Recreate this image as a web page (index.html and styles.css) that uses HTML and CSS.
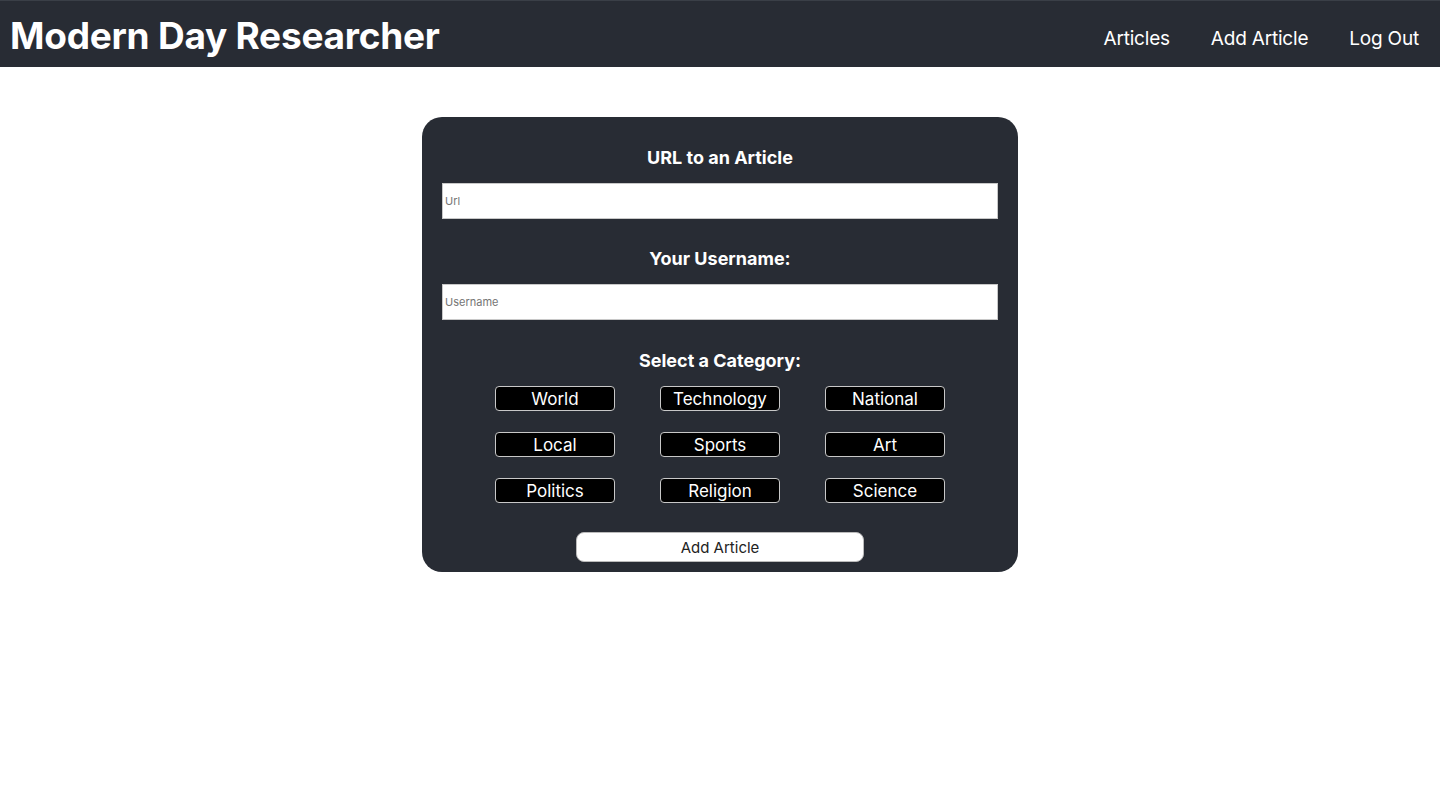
FILE: index.html
```html
<!DOCTYPE html>
<html lang="en">
<head>
<meta charset="utf-8">
<title>Modern Day Researcher</title>
<link rel="stylesheet" href="styles.css">
</head>
<body>
<header class="topbar">
  <h1 class="brand">Modern Day Researcher</h1>
  <nav class="nav">
    <a class="nav-link" href="#">Articles</a>
    <a class="nav-link" href="#">Add Article</a>
    <a class="nav-link" href="#">Log Out</a>
  </nav>
</header>
<main class="main">
  <form class="card">
    <h3 class="label">URL to an Article</h3>
    <input class="field" type="text" placeholder="Url">
    <h3 class="label label-gap">Your Username:</h3>
    <input class="field" type="text" placeholder="Username">
    <h3 class="label label-gap2">Select a Category:</h3>
    <div class="cats">
      <button type="button" class="cat">World</button>
      <button type="button" class="cat">Technology</button>
      <button type="button" class="cat">National</button>
      <button type="button" class="cat">Local</button>
      <button type="button" class="cat">Sports</button>
      <button type="button" class="cat">Art</button>
      <button type="button" class="cat">Politics</button>
      <button type="button" class="cat">Religion</button>
      <button type="button" class="cat">Science</button>
    </div>
    <button type="button" class="submit">Add Article</button>
  </form>
</main>
</body>
</html>
```
FILE: styles.css
```css
* { box-sizing: border-box; }
html, body { margin: 0; padding: 0; background: #fff; }
body { font-family: Inter, "Noto Sans", sans-serif; }

.topbar {
  height: 67px;
  background: #282c34;
  border-top: 1px solid #3a3f47;
  display: flex;
  align-items: center;
  justify-content: space-between;
  padding: 0 21px 0 10px;
}
.brand {
  margin: 0;
  padding-top: 2px;
  color: #fff;
  font-size: 37px;
  font-weight: 700;
  letter-spacing: -0.25px;
  line-height: 1;
}
.nav { display: flex; gap: 41px; padding-top: 9px; }
.nav-link {
  color: #fff;
  text-decoration: none;
  font-size: 19px;
  letter-spacing: -0.2px;
  font-weight: 400;
}

.main { display: flex; justify-content: center; padding-top: 50px; }
.card {
  width: 596px;
  background: #282c34;
  border-radius: 20px;
  padding: 30px 20px 10px;
  display: flex;
  flex-direction: column;
  align-items: center;
}
.label {
  margin: 0 0 15px;
  padding-top: 1px;
  color: #fff;
  font-size: 18px;
  font-weight: 700;
  line-height: 20px;
  text-align: center;
}
.label-gap { margin-top: 29px; }
.label-gap2 { margin-top: 30px; }
.field {
  width: 100%;
  height: 36px;
  flex: none;
  border: 1px solid #c8c8c8;
  background: #fff;
  padding: 0 2px;
  font-family: Inter, sans-serif;
  font-size: 11px;
  color: #333;
  outline: none;
}
.field::placeholder { color: #757575; }
.cats {
  display: grid;
  grid-template-columns: repeat(3, 120px);
  grid-auto-rows: 25px;
  column-gap: 45px;
  row-gap: 21px;
}
.cat {
  height: 25px;
  background: #000;
  color: #fff;
  border: 1px solid #c8c8c8;
  border-radius: 4px;
  font-family: Inter, sans-serif;
  font-size: 17px;
  line-height: 1;
  padding: 1px 0 0;
}
.submit {
  margin-top: 29px;
  width: 288px;
  height: 30px;
  flex: none;
  background: #fff;
  border: 1px solid #bbb;
  border-radius: 8px;
  font-family: Inter, sans-serif;
  font-size: 15px;
  color: #222;
  padding: 0;
}
```
